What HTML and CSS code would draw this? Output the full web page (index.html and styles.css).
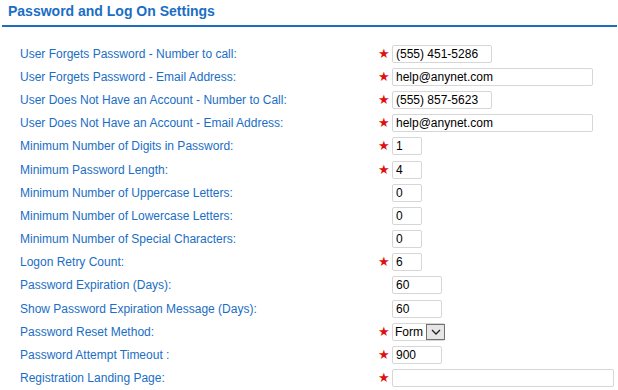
FILE: index.html
```html
<!doctype html>
<html lang="en">
<head>
    <meta charset="UTF-8">
    <title>Password and Log On Settings</title>
    <link rel="stylesheet" href="styles.css">
</head>
<body>
    <h1 class="title">Password and Log On Settings</h1>
    <div class="settings">
        <label class="lbl">User Forgets Password - Number to call:</label>
        <span class="req">★</span>
        <div><input class="fld w100" type="text" value="(555) 451-5286"></div>

        <label class="lbl">User Forgets Password - Email Address:</label>
        <span class="req">★</span>
        <div><input class="fld w200" type="text" value="help@anynet.com"></div>

        <label class="lbl">User Does Not Have an Account - Number to Call:</label>
        <span class="req">★</span>
        <div><input class="fld w100" type="text" value="(555) 857-5623"></div>

        <label class="lbl">User Does Not Have an Account - Email Address:</label>
        <span class="req">★</span>
        <div><input class="fld w200" type="text" value="help@anynet.com"></div>

        <label class="lbl">Minimum Number of Digits in Password:</label>
        <span class="req">★</span>
        <div><input class="fld w30" type="text" value="1"></div>

        <label class="lbl">Minimum Password Length:</label>
        <span class="req">★</span>
        <div><input class="fld w30" type="text" value="4"></div>

        <label class="lbl">Minimum Number of Uppercase Letters:</label>
        <span class="req"></span>
        <div><input class="fld w30" type="text" value="0"></div>

        <label class="lbl">Minimum Number of Lowercase Letters:</label>
        <span class="req"></span>
        <div><input class="fld w30" type="text" value="0"></div>

        <label class="lbl">Minimum Number of Special Characters:</label>
        <span class="req"></span>
        <div><input class="fld w30" type="text" value="0"></div>

        <label class="lbl">Logon Retry Count:</label>
        <span class="req">★</span>
        <div><input class="fld w30" type="text" value="6"></div>

        <label class="lbl">Password Expiration (Days):</label>
        <span class="req"></span>
        <div><input class="fld w50" type="text" value="60"></div>

        <label class="lbl">Show Password Expiration Message (Days):</label>
        <span class="req"></span>
        <div><input class="fld w50" type="text" value="60"></div>

        <label class="lbl">Password Reset Method:</label>
        <span class="req">★</span>
        <div>
            <div class="pick">
                <span class="pick-val">Form</span>
                <span class="pick-btn">
                    <svg width="10" height="6" viewBox="0 0 10 6"><path d="M1 1 L5 5 L9 1" fill="none" stroke="#222" stroke-width="1.3"/></svg>
                </span>
            </div>
        </div>

        <label class="lbl">Password Attempt Timeout :</label>
        <span class="req">★</span>
        <div><input class="fld w50" type="text" value="900"></div>

        <label class="lbl">Registration Landing Page:</label>
        <span class="req">★</span>
        <div><input class="fld w222" type="text" value=""></div>
    </div>
</body>
</html>
```

FILE: styles.css
```css
*{padding:0;margin:0;box-sizing:border-box;}

body{
    background:#fff;
    font-family:"Liberation Sans", Arial, sans-serif;
    font-size:12px;
}

.title{
    margin:0 1px 0 2px;
    padding:3px 6px 6px;
    font-size:14px;
    font-weight:bold;
    color:#1a6ec4;
    border-bottom:2px solid #1b6dbd;
    line-height:16px;
}

.settings{
    display:grid;
    grid-template-columns:358px 14px 1fr;
    grid-auto-rows:23.2px;
    align-items:center;
    padding:15px 0 0 20px;
}

.lbl{
    color:#1a6ec4;
    font-size:12px;
}

.req{
    color:#e01010;
    font-family:"DejaVu Sans", sans-serif;
    font-size:13px;
    line-height:14px;
}

.fld{
    display:block;
    height:18px;
    border:1px solid #d6d6d6;
    border-radius:2px;
    padding:0 3px;
    font-family:"Liberation Sans", Arial, sans-serif;
    font-size:12px;
    color:#000;
    background:#fff;
    outline:none;
}
.w30{width:30px;}
.w50{width:50px;}
.w100{width:100px;}
.w200{width:201px;}
.w222{width:222px;}

.pick{
    display:flex;
    align-items:center;
    width:53px;
    height:18px;
    border:1px solid #d6d6d6;
    border-radius:2px;
    padding-left:2px;
    font-size:12px;
}
.pick-val{
    flex:1;
    color:#000;
}
.pick-btn{
    display:flex;
    align-items:center;
    justify-content:center;
    width:19px;
    height:16px;
    margin-right:-1px;
    background:#e6e6e6;
    border:1px solid #707070;
}
```
